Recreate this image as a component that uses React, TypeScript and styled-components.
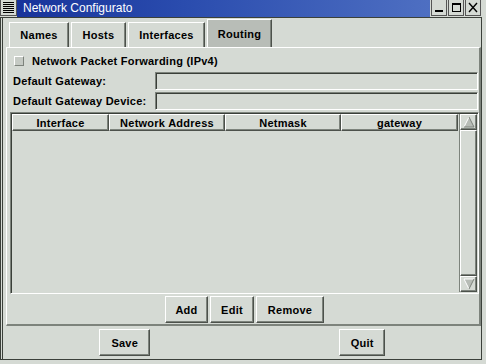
import React from "react";
import styled, { createGlobalStyle, css } from "styled-components";

const bg = "#d5dad4";
const dark = "#7d837c";
const light = "#ffffff";

const GlobalStyle = createGlobalStyle`
  html, body {
    margin: 0;
    padding: 0;
    background: ${bg};
    font-family: "Liberation Sans", Arial, sans-serif;
    font-size: 11px;
    font-weight: bold;
    letter-spacing: 0.25px;
    color: #000;
  }
`;

const raised = css`
  border-top: 1px solid ${light};
  border-left: 1px solid ${light};
  border-right: 1px solid #4c514b;
  border-bottom: 1px solid #4c514b;
  box-shadow: inset -1px -1px 0 ${dark};
`;

const sunken = css`
  border-top: 1px solid ${dark};
  border-left: 1px solid ${dark};
  border-right: 1px solid ${light};
  border-bottom: 1px solid ${light};
  box-shadow: inset 1px 1px 0 #3a3f39;
`;

const Window = styled.div`
  width: 482px;
  height: 360px;
  display: flex;
  flex-direction: column;
  box-sizing: border-box;
`;

const TitleBar = styled.div`
  height: 17px;
  display: flex;
`;

const MenuBox = styled.div`
  width: 17px;
  height: 16px;
  background: ${bg};
  border: 1px solid #555;
  border-top: none;
  box-sizing: border-box;
  display: flex;
  flex-direction: column;
  justify-content: space-evenly;
  padding: 1px 2px;
`;

const MenuLine = styled.div`
  height: 1px;
  background: #000;
`;

const Title = styled.div`
  flex: 1;
  background: linear-gradient(90deg, #18339a 0%, #2a4cae 40%, #4e6fc2 100%);
  color: #fff;
  font-weight: normal;
  font-size: 12px;
  letter-spacing: 0;
  line-height: 17px;
  padding-left: 6px;
  white-space: nowrap;
  overflow: hidden;
`;

const Controls = styled.div`
  display: flex;
  background: ${bg};
  padding-left: 1px;
`;

const CtrlButton = styled.div`
  width: 14px;
  height: 15px;
  border: 1px solid #555;
  border-top: none;
  margin-right: 1px;
  background: ${bg};
  display: flex;
  align-items: center;
  justify-content: center;
`;

const Frame = styled.div`
  flex: 1;
  display: flex;
  flex-direction: column;
  border-left: 3px double #3b403a;
  border-right: 1px solid #3b403a;
  border-bottom: 1px solid #3b403a;
  border-top: 1px solid #3b403a;
  padding: 0 0 0 3px;
  background: ${bg};
`;

const TabRow = styled.div`
  display: flex;
  align-items: flex-end;
  height: 29px;
  padding-left: 3px;
  gap: 2px;
`;

const Tab = styled.div<{ $active?: boolean; $w: number }>`
  ${raised};
  border-bottom: none;
  box-shadow: inset -1px 0 0 ${dark};
  height: ${(p) => (p.$active ? 28 : 25)}px;
  width: ${(p) => p.$w}px;
  background: ${(p) => (p.$active ? "#b8bdb7" : bg)};
  display: flex;
  align-items: center;
  justify-content: center;
  box-sizing: border-box;
`;

const Panel = styled.div`
  height: 279px;
  border-top: 1px solid ${light};
  border-left: 1px solid ${light};
  border-right: 2px solid ${dark};
  border-bottom: 2px solid ${dark};
  display: flex;
  flex-direction: column;
  padding: 4px 0 0 3px;
  box-sizing: border-box;
`;

const CheckRow = styled.div`
  display: flex;
  align-items: center;
  height: 18px;
  gap: 8px;
  padding-left: 4px;
`;

const CheckBox = styled.div`
  width: 8px;
  height: 8px;
  ${raised};
  box-shadow: none;
  border-right-color: ${dark};
  border-bottom-color: ${dark};
  background: #c5cac4;
`;

const FieldRow = styled.div`
  display: grid;
  grid-template-columns: 142px 1fr;
  align-items: center;
  height: 19px;
  margin-top: 1px;
  padding-left: 3px;
`;

const Field = styled.div`
  ${sunken};
  height: 16px;
  background: ${bg};
  margin-right: 1px;
`;

const Table = styled.div`
  margin-top: 2px;
  flex: 1;
  display: flex;
  ${sunken};
  padding: 1px;
`;

const ListArea = styled.div`
  flex: 1;
  display: flex;
  flex-direction: column;
`;

const Header = styled.div`
  display: grid;
  grid-template-columns: 97px 116px 116px 1fr;
`;

const HeadCell = styled.div`
  ${raised};
  height: 17px;
  box-sizing: border-box;
  display: flex;
  align-items: center;
  justify-content: center;
`;

const Scrollbar = styled.div`
  width: 17px;
  display: flex;
  flex-direction: column;
  border-left: 1px solid ${dark};
  margin-left: 1px;
`;

const Arrow = styled.div`
  height: 16px;
  ${raised};
  box-sizing: border-box;
  display: flex;
  align-items: center;
  justify-content: center;
`;

const Slider = styled.div`
  flex: 1;
  ${raised};
`;

const ButtonRow = styled.div`
  display: flex;
  justify-content: center;
  gap: 2px;
  padding: 2px 0 1px 0;
`;

const Button = styled.div<{ $w: number }>`
  ${raised};
  width: ${(p) => p.$w}px;
  height: 27px;
  box-sizing: border-box;
  display: flex;
  align-items: center;
  justify-content: center;
`;

const BottomRow = styled.div`
  display: grid;
  grid-template-columns: 1fr 1fr;
  justify-items: center;
  padding-top: 3px;
`;

const UpArrow = () => (
  <svg width="12" height="12" viewBox="0 0 12 12">
    <polygon points="6,1 11,11 1,11" fill="#b7bcb6" />
    <polyline points="1,11 6,1" stroke="#fff" fill="none" />
    <polyline points="6,1 11,11 1,11" stroke="#7d837c" fill="none" />
  </svg>
);

const DownArrow = () => (
  <svg width="12" height="12" viewBox="0 0 12 12">
    <polygon points="1,1 11,1 6,11" fill="#b7bcb6" />
    <polyline points="6,11 1,1 11,1" stroke="#fff" fill="none" />
    <polyline points="11,1 6,11" stroke="#7d837c" fill="none" />
  </svg>
);

export default function App() {
  return (
    <>
      <GlobalStyle />
      <Window>
        <TitleBar>
          <MenuBox>
            <MenuLine />
            <MenuLine />
            <MenuLine />
            <MenuLine />
            <MenuLine />
            <MenuLine />
          </MenuBox>
          <Title>Network Configurato</Title>
          <Controls>
            <CtrlButton>
              <svg width="10" height="11" viewBox="0 0 10 11">
                <rect x="1" y="8" width="8" height="2" fill="#000" />
              </svg>
            </CtrlButton>
            <CtrlButton>
              <svg width="10" height="11" viewBox="0 0 10 11">
                <rect x="1.5" y="1.5" width="8" height="8" fill="none" stroke="#000" />
                <rect x="1" y="1" width="9" height="2" fill="#000" />
              </svg>
            </CtrlButton>
            <CtrlButton>
              <svg width="10" height="11" viewBox="0 0 10 11">
                <path d="M1 1 L9 10 M9 1 L1 10" stroke="#000" strokeWidth="1.4" />
              </svg>
            </CtrlButton>
          </Controls>
        </TitleBar>
        <Frame>
          <TabRow>
            <Tab $w={60}>Names</Tab>
            <Tab $w={55}>Hosts</Tab>
            <Tab $w={77}>Interfaces</Tab>
            <Tab $w={65} $active>
              Routing
            </Tab>
          </TabRow>
          <Panel>
            <CheckRow>
              <CheckBox />
              <span>Network Packet Forwarding (IPv4)</span>
            </CheckRow>
            <FieldRow>
              <span>Default Gateway:</span>
              <Field />
            </FieldRow>
            <FieldRow>
              <span>Default Gateway Device:</span>
              <Field />
            </FieldRow>
            <Table>
              <ListArea>
                <Header>
                  <HeadCell>Interface</HeadCell>
                  <HeadCell>Network Address</HeadCell>
                  <HeadCell>Netmask</HeadCell>
                  <HeadCell>gateway</HeadCell>
                </Header>
              </ListArea>
              <Scrollbar>
                <Arrow>
                  <UpArrow />
                </Arrow>
                <Slider />
                <Arrow>
                  <DownArrow />
                </Arrow>
              </Scrollbar>
            </Table>
            <ButtonRow>
              <Button $w={43}>Add</Button>
              <Button $w={44}>Edit</Button>
              <Button $w={68}>Remove</Button>
            </ButtonRow>
          </Panel>
          <BottomRow>
            <Button $w={51}>Save</Button>
            <Button $w={46}>Quit</Button>
          </BottomRow>
        </Frame>
      </Window>
    </>
  );
}
